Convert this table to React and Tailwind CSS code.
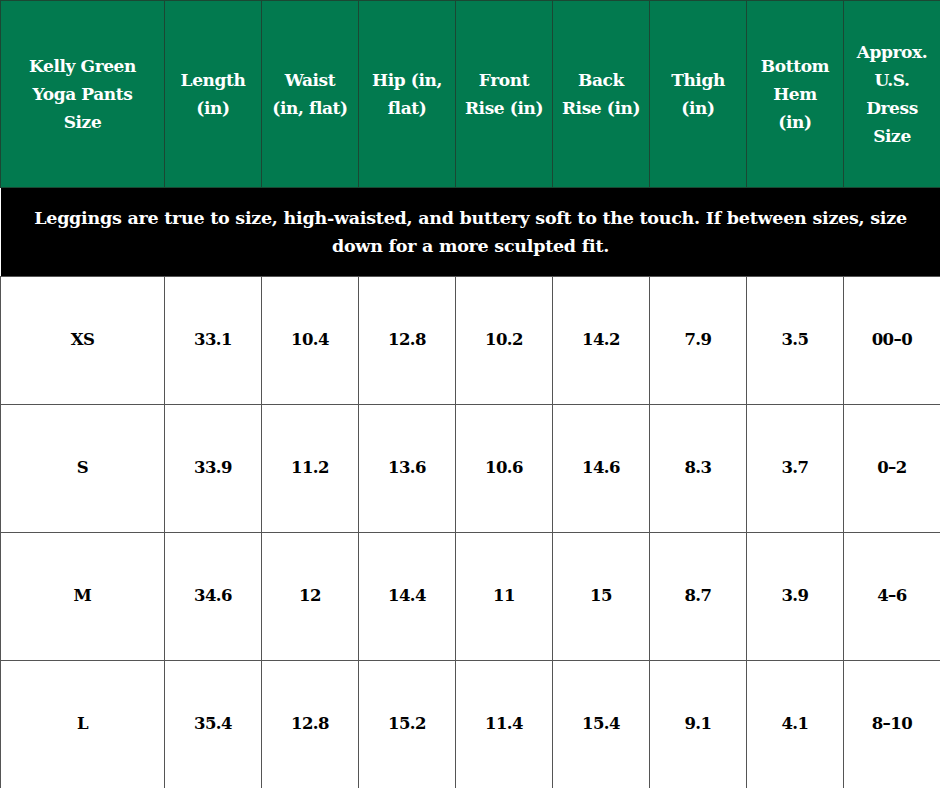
import React from 'react';

// each header is split into the lines it shows in the chart
const HEADERS = [
  ['Kelly Green', 'Yoga Pants', 'Size'],
  ['Length', '(in)'],
  ['Waist', '(in, flat)'],
  ['Hip (in,', 'flat)'],
  ['Front', 'Rise (in)'],
  ['Back', 'Rise (in)'],
  ['Thigh', '(in)'],
  ['Bottom', 'Hem', '(in)'],
  ['Approx.', 'U.S.', 'Dress', 'Size'],
];

const ROWS = [
  ['XS', '33.1', '10.4', '12.8', '10.2', '14.2', '7.9', '3.5', '00–0'],
  ['S', '33.9', '11.2', '13.6', '10.6', '14.6', '8.3', '3.7', '0–2'],
  ['M', '34.6', '12', '14.4', '11', '15', '8.7', '3.9', '4–6'],
  ['L', '35.4', '12.8', '15.2', '11.4', '15.4', '9.1', '4.1', '8–10'],
];

export default function App() {
  return (
    <div className="w-[940px] h-[788px] overflow-hidden bg-white font-['DejaVu_Serif',serif]">
      <table className="w-[941px] table-fixed border-collapse">
        <colgroup>
          <col className="w-[164px]" />
          {HEADERS.slice(1).map((h) => (
            <col key={h[0]} className="w-[97px]" />
          ))}
        </colgroup>
        <thead>
          <tr className="h-[187px] bg-[#027a4f]">
            {HEADERS.map((h) => (
              <th
                key={h[0]}
                className="border border-[#1b4733] px-0 text-center align-middle text-[17px] leading-[28px] font-bold text-white tracking-[-0.4px] whitespace-nowrap"
              >
                {h.map((line) => (
                  <div key={line}>{line}</div>
                ))}
              </th>
            ))}
          </tr>
        </thead>
        <tbody>
          {/* fit note band */}
          <tr className="h-[89px] bg-black">
            <td colSpan={9} className="px-6 text-center text-[17.5px] leading-[28px] font-bold text-white tracking-[-0.25px]">
              Leggings are true to size, high-waisted, and buttery soft to the touch. If between sizes, size down for a more sculpted fit.
            </td>
          </tr>
          {ROWS.map((row) => (
            <tr key={row[0]} className="h-[128px]">
              {row.map((cell, i) => (
                <td
                  key={i}
                  className="border border-[#555] text-center align-middle text-[16.5px] font-bold text-black tracking-[-0.5px]"
                >
                  {cell}
                </td>
              ))}
            </tr>
          ))}
        </tbody>
      </table>
    </div>
  );
}
